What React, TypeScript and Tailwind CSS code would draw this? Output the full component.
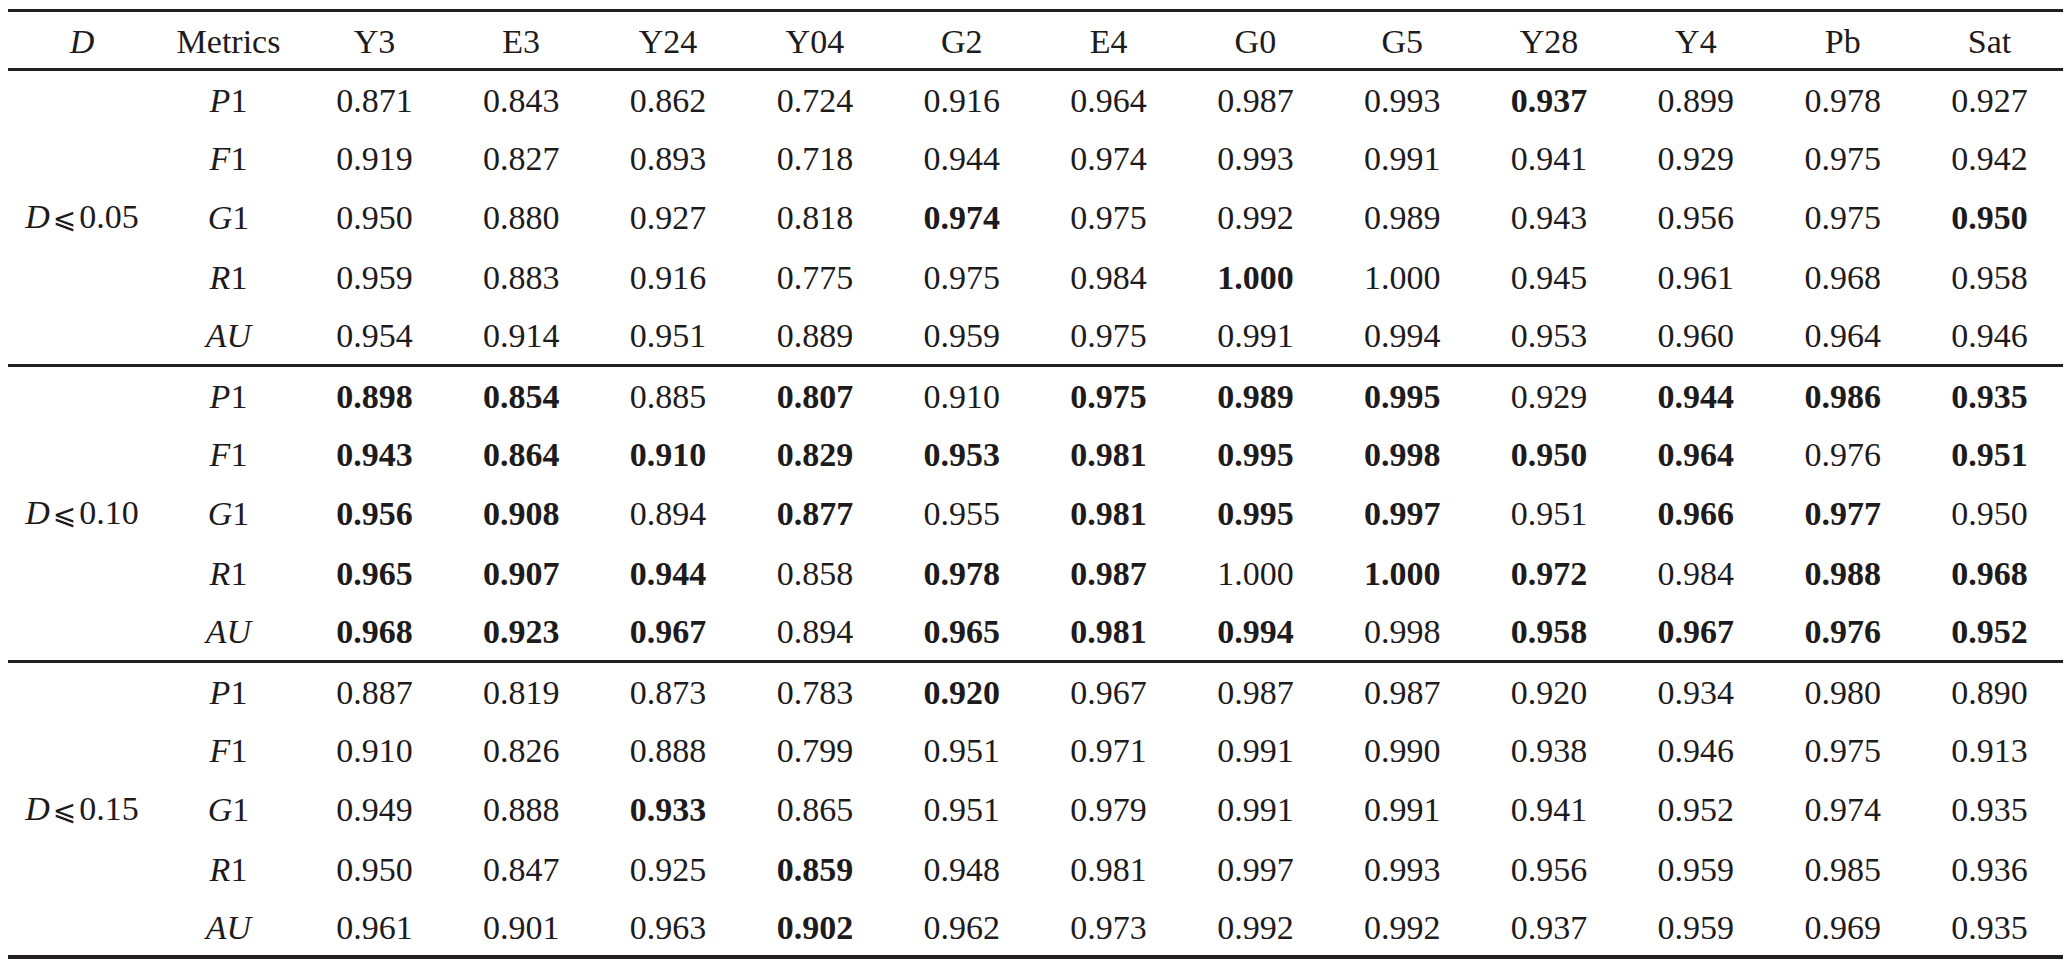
const cols = ["Y3", "E3", "Y24", "Y04", "G2", "E4", "G0", "G5", "Y28", "Y4", "Pb", "Sat"];

// "*" marks a bold (best) value
const groups = [
  {
    d: "0.05",
    rows: [
      ["P", "1", "0.871 0.843 0.862 0.724 0.916 0.964 0.987 0.993 *0.937 0.899 0.978 0.927"],
      ["F", "1", "0.919 0.827 0.893 0.718 0.944 0.974 0.993 0.991 0.941 0.929 0.975 0.942"],
      ["G", "1", "0.950 0.880 0.927 0.818 *0.974 0.975 0.992 0.989 0.943 0.956 0.975 *0.950"],
      ["R", "1", "0.959 0.883 0.916 0.775 0.975 0.984 *1.000 1.000 0.945 0.961 0.968 0.958"],
      ["AU", "", "0.954 0.914 0.951 0.889 0.959 0.975 0.991 0.994 0.953 0.960 0.964 0.946"],
    ],
  },
  {
    d: "0.10",
    rows: [
      ["P", "1", "*0.898 *0.854 0.885 *0.807 0.910 *0.975 *0.989 *0.995 0.929 *0.944 *0.986 *0.935"],
      ["F", "1", "*0.943 *0.864 *0.910 *0.829 *0.953 *0.981 *0.995 *0.998 *0.950 *0.964 0.976 *0.951"],
      ["G", "1", "*0.956 *0.908 0.894 *0.877 0.955 *0.981 *0.995 *0.997 0.951 *0.966 *0.977 0.950"],
      ["R", "1", "*0.965 *0.907 *0.944 0.858 *0.978 *0.987 1.000 *1.000 *0.972 0.984 *0.988 *0.968"],
      ["AU", "", "*0.968 *0.923 *0.967 0.894 *0.965 *0.981 *0.994 0.998 *0.958 *0.967 *0.976 *0.952"],
    ],
  },
  {
    d: "0.15",
    rows: [
      ["P", "1", "0.887 0.819 0.873 0.783 *0.920 0.967 0.987 0.987 0.920 0.934 0.980 0.890"],
      ["F", "1", "0.910 0.826 0.888 0.799 0.951 0.971 0.991 0.990 0.938 0.946 0.975 0.913"],
      ["G", "1", "0.949 0.888 *0.933 0.865 0.951 0.979 0.991 0.991 0.941 0.952 0.974 0.935"],
      ["R", "1", "0.950 0.847 0.925 *0.859 0.948 0.981 0.997 0.993 0.956 0.959 0.985 0.936"],
      ["AU", "", "0.961 0.901 0.963 *0.902 0.962 0.973 0.992 0.992 0.937 0.959 0.969 0.935"],
    ],
  },
];

export default function App() {
  return (
    <div className="min-h-screen bg-white pt-[9px] pl-[8px] text-[#1e1b1c] font-['Liberation_Serif','DejaVu_Serif','DejaVu_Sans',serif] text-[34px] leading-none">
      <table className="w-[2055px] table-fixed border-collapse">
        <colgroup>
          <col className="w-[148px]" />
          <col className="w-[145px]" />
        </colgroup>
        <thead className="border-t-[3px] border-b-[3px] border-[#231f20]">
          <tr className="h-[59px]">
            <th className="pt-[3px] font-normal italic">D</th>
            <th className="pt-[3px] font-normal">Metrics</th>
            {cols.map((c) => (
              <th key={c} className="pt-[3px] font-normal">
                {c}
              </th>
            ))}
          </tr>
        </thead>
        {groups.map((g, gi) => (
          <tbody
            key={g.d}
            className={
              gi === groups.length - 1
                ? "border-b-4 border-[#231f20]"
                : "border-b-[3px] border-[#231f20]"
            }
          >
            {g.rows.map((r, ri) => (
              <tr key={r[0]} className="h-[59.2px]">
                {ri === 0 && (
                  <td rowSpan={5} className="text-center whitespace-nowrap">
                    <span className="italic">D</span>
                    <span className="text-[28px] mx-[3px]">⩽</span>
                    {g.d}
                  </td>
                )}
                <td className="pt-[2px] text-center">
                  <span className="italic">{r[0]}</span>
                  {r[1]}
                </td>
                {r[2].split(" ").map((v, vi) => (
                  <td
                    key={vi}
                    className={"pt-[2px] text-center " + (v.startsWith("*") ? "font-bold" : "")}
                  >
                    {v.replace("*", "")}
                  </td>
                ))}
              </tr>
            ))}
          </tbody>
        ))}
      </table>
    </div>
  );
}
